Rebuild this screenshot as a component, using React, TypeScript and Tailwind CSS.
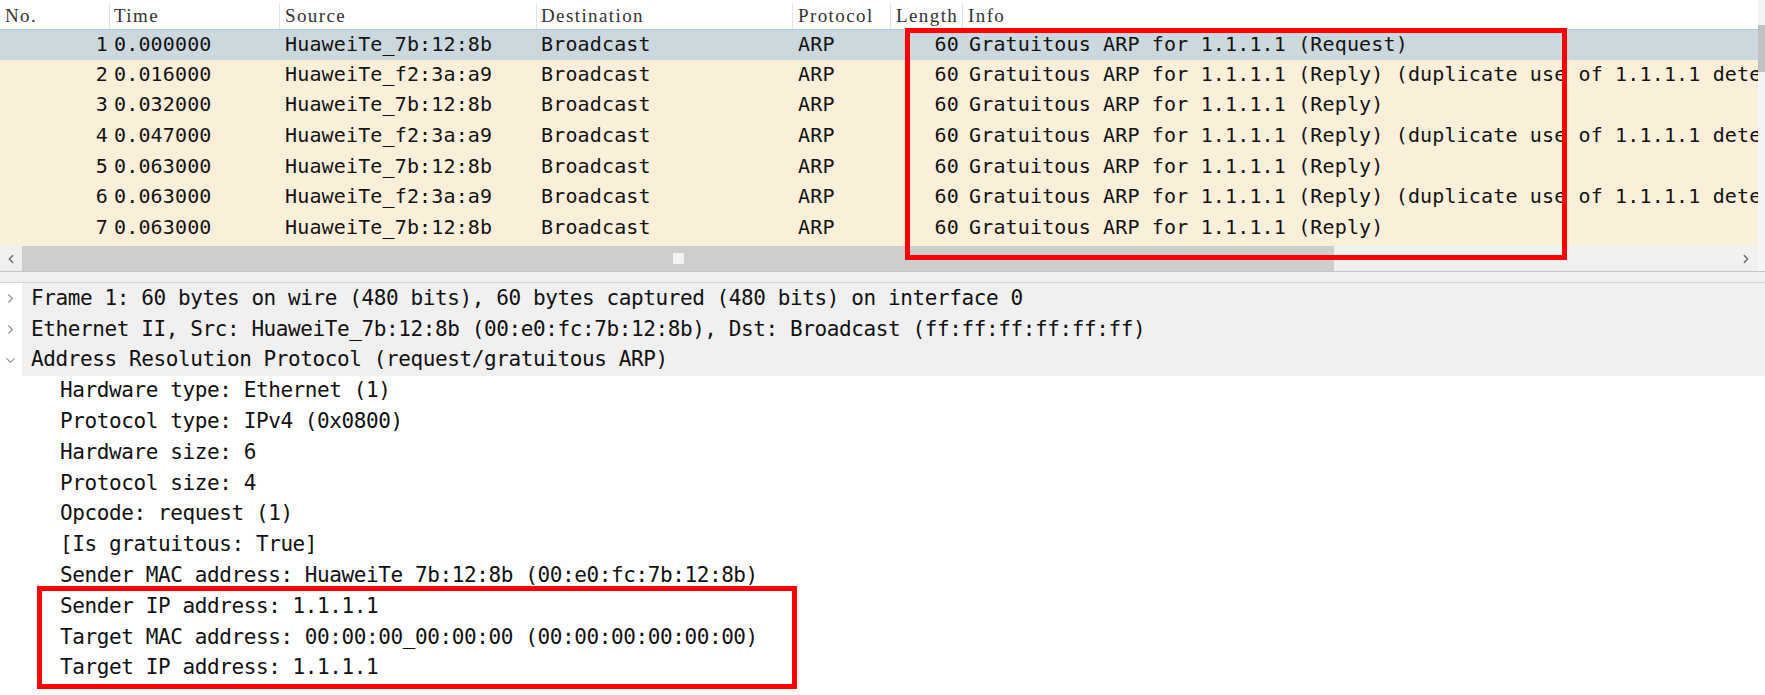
import { ChevronRight, ChevronDown, ChevronLeft } from "lucide-react"

const packets = [
  { no: 1, time: "0.000000", src: "HuaweiTe_7b:12:8b", info: "Gratuitous ARP for 1.1.1.1 (Request)" },
  { no: 2, time: "0.016000", src: "HuaweiTe_f2:3a:a9", info: "Gratuitous ARP for 1.1.1.1 (Reply) (duplicate use of 1.1.1.1 detected!)" },
  { no: 3, time: "0.032000", src: "HuaweiTe_7b:12:8b", info: "Gratuitous ARP for 1.1.1.1 (Reply)" },
  { no: 4, time: "0.047000", src: "HuaweiTe_f2:3a:a9", info: "Gratuitous ARP for 1.1.1.1 (Reply) (duplicate use of 1.1.1.1 detected!)" },
  { no: 5, time: "0.063000", src: "HuaweiTe_7b:12:8b", info: "Gratuitous ARP for 1.1.1.1 (Reply)" },
  { no: 6, time: "0.063000", src: "HuaweiTe_f2:3a:a9", info: "Gratuitous ARP for 1.1.1.1 (Reply) (duplicate use of 1.1.1.1 detected!)" },
  { no: 7, time: "0.063000", src: "HuaweiTe_7b:12:8b", info: "Gratuitous ARP for 1.1.1.1 (Reply)" },
]

const topLevel = [
  { open: false, text: "Frame 1: 60 bytes on wire (480 bits), 60 bytes captured (480 bits) on interface 0" },
  { open: false, text: "Ethernet II, Src: HuaweiTe_7b:12:8b (00:e0:fc:7b:12:8b), Dst: Broadcast (ff:ff:ff:ff:ff:ff)" },
  { open: true, text: "Address Resolution Protocol (request/gratuitous ARP)" },
]

const arpFields = [
  "Hardware type: Ethernet (1)",
  "Protocol type: IPv4 (0x0800)",
  "Hardware size: 6",
  "Protocol size: 4",
  "Opcode: request (1)",
  "[Is gratuitous: True]",
  "Sender MAC address: HuaweiTe_7b:12:8b (00:e0:fc:7b:12:8b)",
  "Sender IP address: 1.1.1.1",
  "Target MAC address: 00:00:00_00:00:00 (00:00:00:00:00:00)",
  "Target IP address: 1.1.1.1",
]

function PacketList() {
  return (
    <div className="flex">
      <div className="w-[1758px]">
        {/* column headers */}
        <div className="flex h-[29px] pt-[3px] bg-white font-['Liberation_Serif',serif] text-[19px] tracking-[1.4px] text-[#333]">
          <div className="w-[109px] pl-[5px] flex items-center">No.</div>
          <div className="w-[170px] border-l border-[#e3e3e3] pl-[4px] flex items-center">Time</div>
          <div className="w-[257px] border-l border-[#e3e3e3] pl-[5px] flex items-center">Source</div>
          <div className="w-[256px] border-l border-[#e3e3e3] pl-[4px] flex items-center">Destination</div>
          <div className="w-[98px] border-l border-[#e3e3e3] pl-[5px] flex items-center">Protocol</div>
          <div className="w-[72px] border-l border-[#e3e3e3] pl-[5px] flex items-center">Length</div>
          <div className="flex-1 border-l border-[#e3e3e3] pl-[5px] flex items-center">Info</div>
        </div>

        {/* rows */}
        <div className="font-['DejaVu_Sans_Mono',monospace] text-[20px] tracking-[0.15px] text-[#121212] bg-[#faefd9] pb-[3px]">
          {packets.map((p) => (
            <div
              key={p.no}
              className={
                p.no === 1
                  ? "flex items-center h-[30.6px] pb-[2px] whitespace-nowrap overflow-hidden bg-[#cbd9df] border-t border-[#a3c8e8]"
                  : "flex items-center h-[30.6px] pb-[2px] whitespace-nowrap overflow-hidden"
              }
            >
              <div className="w-[109px] shrink-0 text-right pr-[1px]">{p.no}</div>
              <div className="w-[170px] shrink-0 pl-[5px]">{p.time}</div>
              <div className="w-[257px] shrink-0 pl-[6px]">{p.src}</div>
              <div className="w-[256px] shrink-0 pl-[5px]">Broadcast</div>
              <div className="w-[98px] shrink-0 pl-[6px]">ARP</div>
              <div className="w-[72px] shrink-0 text-right pr-[3px]">60</div>
              <div className="flex-1 pl-[7px] overflow-hidden">{p.info}</div>
            </div>
          ))}
        </div>

        {/* horizontal scrollbar */}
        <div className="flex h-[26px] bg-[#f0f0f0] border-b border-[#c4c4c4]">
          <div className="w-[22px] flex items-center justify-center text-[#606060]">
            <ChevronLeft size={14} strokeWidth={2.2} />
          </div>
          <div className="w-[1312px] bg-[#cdcdcd] flex items-center justify-center">
            <div className="w-[11px] h-[11px] bg-[#f2f2f2]" />
          </div>
          <div className="flex-1" />
          <div className="w-[25px] flex items-center justify-center text-[#606060]">
            <ChevronRight size={14} strokeWidth={2.2} />
          </div>
        </div>
      </div>

      {/* vertical scrollbar */}
      <div className="w-[7px] bg-[#f4f4f4] border-b border-[#c4c4c4]">
        <div className="h-[25px]" />
        <div className="h-[47px] bg-[#c2c2c2]" />
      </div>
    </div>
  )
}

function Details() {
  return (
    <div className="font-['DejaVu_Sans_Mono',monospace] text-[21px] tracking-[-0.4px] text-[#111] whitespace-nowrap">
      {topLevel.map((t, i) => (
        <div key={i} className="flex items-center h-[30.8px]">
          <div className="w-[22px] h-full flex items-center pl-[3px] text-[#8f8f8f]">
            {t.open ? <ChevronDown size={15} strokeWidth={1.7} /> : <ChevronRight size={15} strokeWidth={1.7} />}
          </div>
          <div className="flex-1 h-full bg-[#f0f0f0] flex items-center pl-[9px]">{t.text}</div>
        </div>
      ))}
      {arpFields.map((f, i) => (
        <div key={i} className="flex items-center h-[30.8px] pl-[60px]">
          {f}
        </div>
      ))}
    </div>
  )
}

export default function App() {
  return (
    <div className="relative w-[1765px] h-[695px] overflow-hidden bg-white">
      <PacketList />

      {/* splitter between panes */}
      <div className="h-[11px] bg-[#f0f0f0] border-b border-[#d6d6d6]" />

      <Details />

      {/* red highlight boxes drawn over the capture */}
      <div className="absolute left-[905px] top-[28px] w-[662px] h-[232px] border-[5px] border-[#ff0000]" />
      <div className="absolute left-[37px] top-[586px] w-[760px] h-[103px] border-[5px] border-[#ff0000]" />
    </div>
  )
}
